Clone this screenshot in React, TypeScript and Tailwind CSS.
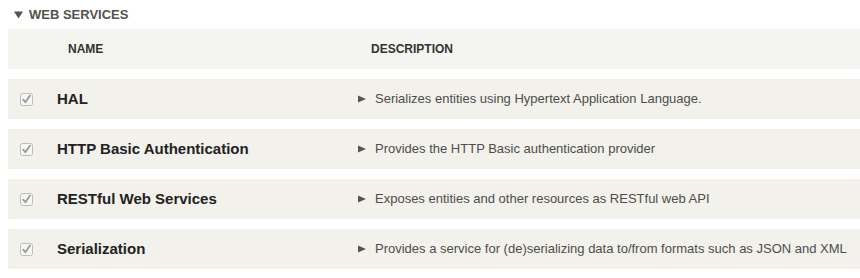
import React from "react";

const modules = [
  { name: "HAL", description: "Serializes entities using Hypertext Application Language." },
  { name: "HTTP Basic Authentication", description: "Provides the HTTP Basic authentication provider" },
  { name: "RESTful Web Services", description: "Exposes entities and other resources as RESTful web API" },
  { name: "Serialization", description: "Provides a service for (de)serializing data to/from formats such as JSON and XML" },
];

function CheckedBox() {
  return (
    <svg width="13" height="13" viewBox="0 0 13 13">
      <rect x="0.5" y="0.5" width="12" height="12" rx="2" fill="#f6f6f6" stroke="#bdbdbd" />
      <path d="M3.2 6.6 L5.4 9.2 L10 2.6" fill="none" stroke="#9a9a9a" strokeWidth="1.8" strokeLinecap="round" strokeLinejoin="round" />
    </svg>
  );
}

function Arrow() {
  return (
    <svg width="8" height="8" viewBox="0 0 8 8" className="shrink-0">
      <polygon points="0,0.5 8,4 0,7.5" fill="#555" />
    </svg>
  );
}

export default function App() {
  return (
    <div className="w-[860px] h-[278px] bg-white pl-2 font-['Liberation_Sans',Arial,sans-serif] overflow-hidden">
      <div className="h-[29px] flex items-center gap-[6px] pl-[6px] text-[#55524d]">
        <svg width="9" height="8" viewBox="0 0 9 8">
          <polygon points="0,0.5 9,0.5 4.5,7.5" fill="#55524d" />
        </svg>
        <span className="text-[13px] font-bold uppercase">Web Services</span>
      </div>

      <div className="h-10 bg-[#f4f4f0] flex items-center text-[12px] font-bold text-[#333] uppercase">
        <div className="w-[60px]" />
        <div className="w-[303px]">Name</div>
        <div>Description</div>
      </div>

      {modules.map((m) => (
        <div key={m.name} className="mt-[10px] h-10 bg-[#f2f1eb] flex items-center whitespace-nowrap">
          <div className="w-[49px] shrink-0 pl-3 flex items-center">
            <CheckedBox />
          </div>
          <div className="w-[293px] shrink-0 text-[15px] font-bold text-[#222]">{m.name}</div>
          <div className="pl-2 flex items-center gap-[9px] text-[13px] text-[#4d4d4d]">
            <Arrow />
            <span>{m.description}</span>
          </div>
        </div>
      ))}
    </div>
  );
}
